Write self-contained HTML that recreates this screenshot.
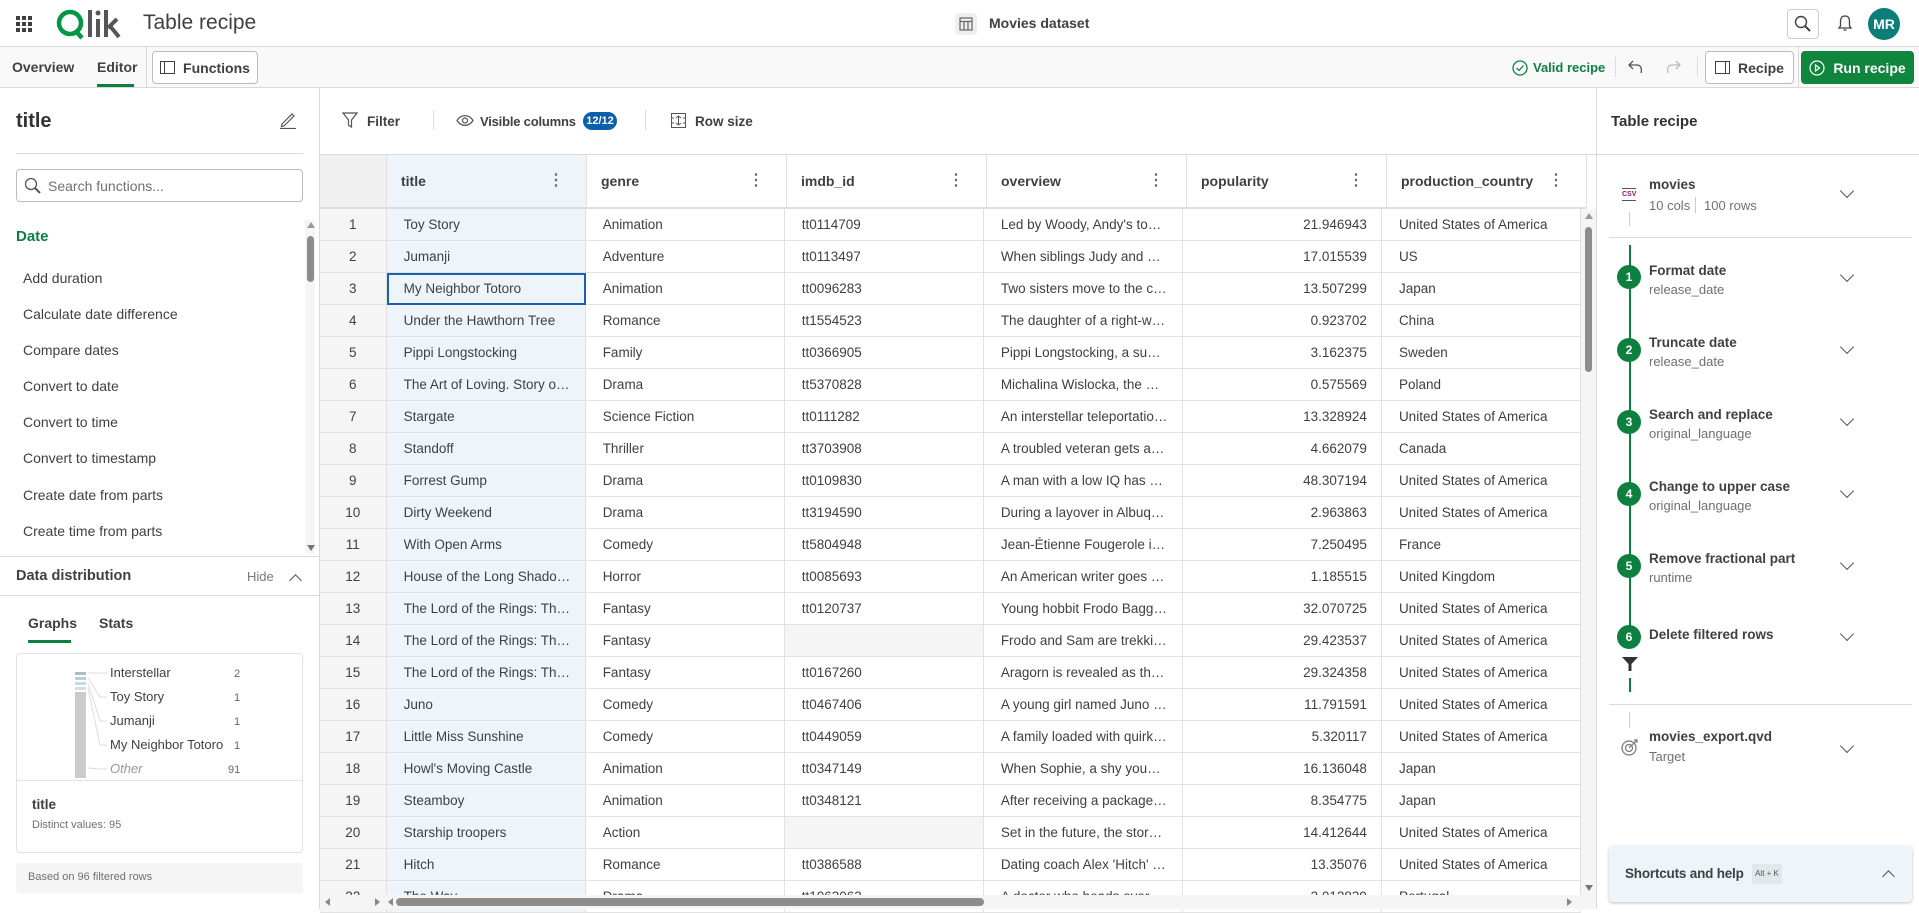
<!DOCTYPE html>
<html><head><meta charset="utf-8">
<style>
*{box-sizing:border-box;margin:0;padding:0}
body{width:1919px;height:909px;overflow:hidden;background:#fff;font-family:"Liberation Sans",sans-serif;color:#404040;position:relative;font-size:14px}
.a{position:absolute}
.topbar{left:0;top:0;width:1919px;height:47px;border-bottom:1px solid #d9d9d9;background:#fff}
.tool{left:0;top:47px;width:1919px;height:41px;border-bottom:1px solid #d9d9d9;background:#f9f9f9}
.left{left:0;top:88px;width:320px;height:821px;border-right:1px solid #d9d9d9;background:#fff}
.right{left:1596px;top:88px;width:323px;height:821px;border-left:1px solid #d9d9d9;background:#fff}
.btn{border:1px solid #bcbcbc;border-radius:4px;background:#fff;font-weight:bold;font-size:14px;color:#404040;display:flex;align-items:center;justify-content:center;gap:8px}
.row{position:absolute;left:320px;height:32px;display:flex;width:1261px}
.row>div{height:32px;border-bottom:1px solid #e2e2e2;border-right:1px solid #e2e2e2;line-height:31px;font-size:13.5px;padding:0 14px 0 17px;white-space:nowrap;overflow:hidden;text-overflow:ellipsis;color:#404040}
.c0{width:67px;text-align:center;background:#f5f5f5;padding:0!important}
.c1{width:200px;background:#edf5fb}
.c2,.c3,.c4,.c5,.c6{width:200px}
.c5{text-align:right}
.hdr{position:absolute;left:320px;top:155px;height:54px;display:flex;border-bottom:2px solid #dedede}
.hdr>div{height:52px;border-right:1px solid #e2e2e2;line-height:52px;font-size:14px;font-weight:bold;padding-left:14px;position:relative;width:200px;color:#404040}
.hdr .k{position:absolute;right:22px;top:0;color:#707070;font-weight:bold;font-size:16px}
.fn{position:absolute;left:23px;font-size:14px;color:#404040}
.step{position:absolute;left:1649px;font-weight:bold;font-size:13.5px;color:#404040}
.sub{position:absolute;left:1649px;font-size:13px;color:#707070}
.circ{position:absolute;left:1617px;width:24px;height:24px;border-radius:50%;background:#0d8040;color:#fff;font-size:12px;font-weight:bold;text-align:center;line-height:24px}
.chev{position:absolute;left:1842px;width:10px;height:10px;border-right:1.5px solid #555;border-bottom:1.5px solid #555;transform:rotate(45deg)}
</style></head><body>

<div class="a topbar"></div>
<svg class="a" style="left:16px;top:16px" width="16" height="16"><g fill="#404040"><rect x="0" y="0" width="4" height="4"/><rect x="6" y="0" width="4" height="4"/><rect x="12" y="0" width="4" height="4"/><rect x="0" y="6" width="4" height="4"/><rect x="6" y="6" width="4" height="4"/><rect x="12" y="6" width="4" height="4"/><rect x="0" y="12" width="4" height="4"/><rect x="6" y="12" width="4" height="4"/><rect x="12" y="12" width="4" height="4"/></g></svg>
<svg class="a" style="left:56px;top:8px" width="70" height="32" viewBox="0 0 70 32">
<circle cx="14" cy="15" r="11" fill="none" stroke="#009845" stroke-width="4.5"/>
<path d="M19 22 L26 30" stroke="#009845" stroke-width="4.5"/>
<rect x="32" y="2" width="4" height="27" fill="#555"/>
<rect x="40" y="11" width="4" height="18" fill="#555"/>
<circle cx="42" cy="5" r="2.5" fill="#555"/>
<rect x="48" y="2" width="4" height="27" fill="#555"/>
<path d="M52 20 L61 11 M54 18 L63 29" stroke="#555" stroke-width="4"/>
</svg>
<div class="a" style="left:143px;top:11px;font-size:21px;color:#404040">Table recipe</div>
<div class="a" style="left:955px;top:13px;width:22px;height:22px;border-radius:4px;background:#eee"></div>
<svg class="a" style="left:959px;top:17px" width="14" height="14"><rect x="1" y="1" width="12" height="12" fill="none" stroke="#666" stroke-width="1.2"/><path d="M1 4.5H13M5 4.5V13M9 4.5V13" stroke="#666" stroke-width="1.2"/></svg>
<div class="a" style="left:989px;top:15px;font-size:14px;font-weight:bold">Movies dataset</div>
<div class="a" style="left:1787px;top:9px;width:32px;height:30px;border:1px solid #ccc;border-radius:4px"></div>
<svg class="a" style="left:1794px;top:15px" width="18" height="18"><circle cx="7" cy="7" r="5.5" fill="none" stroke="#404040" stroke-width="1.4"/><path d="M11 11 L16 16" stroke="#404040" stroke-width="2"/></svg>
<svg class="a" style="left:1837px;top:14px" width="16" height="19"><path d="M8 2 C4 2 3.5 5 3.5 8 L3.5 12 L2 14 H14 L12.5 12 L12.5 8 C12.5 5 12 2 8 2Z M6.5 16 H9.5" fill="none" stroke="#404040" stroke-width="1.3"/></svg>
<div class="a" style="left:1868px;top:8px;width:32px;height:32px;border-radius:50%;background:#0c7e78;color:#fff;font-weight:bold;font-size:14px;text-align:center;line-height:32px">MR</div>

<div class="a tool"></div>
<div class="a" style="left:12px;top:59px;font-size:14px;font-weight:bold;color:#404040">Overview</div>
<div class="a" style="left:97px;top:59px;font-size:14px;font-weight:bold;color:#404040">Editor</div>
<div class="a" style="left:97px;top:84px;width:37px;height:3px;background:#0d8040"></div>
<div class="a" style="left:146px;top:47px;width:1px;height:41px;background:#d9d9d9"></div>
<div class="a btn" style="left:152px;top:51px;width:106px;height:33px"><svg width="15" height="13"><rect x="0.5" y="0.5" width="14" height="12" fill="none" stroke="#404040"/><path d="M4.5 0.5V12.5" stroke="#404040"/></svg>Functions</div>
<svg class="a" style="left:1512px;top:60px" width="16" height="16"><circle cx="8" cy="8" r="7" fill="none" stroke="#0d8040" stroke-width="1.3"/><path d="M4.5 8.2 L7 10.5 L11.5 5.5" fill="none" stroke="#0d8040" stroke-width="1.3"/></svg>
<div class="a" style="left:1533px;top:60px;font-size:13px;font-weight:bold;color:#0d8040">Valid recipe</div>
<div class="a" style="left:1615px;top:57px;width:1px;height:20px;background:#ddd"></div>
<svg class="a" style="left:1627px;top:59px" width="18" height="16"><path d="M6 2 L2 6 L6 10 M2 6 H10 C14 6 15 10 14 14" fill="none" stroke="#555" stroke-width="1.3"/></svg>
<svg class="a" style="left:1664px;top:59px" width="18" height="16"><path d="M12 2 L16 6 L12 10 M16 6 H8 C4 6 3 10 4 14" fill="none" stroke="#bbb" stroke-width="1.3"/></svg>
<div class="a" style="left:1697px;top:57px;width:1px;height:20px;background:#ddd"></div>
<div class="a btn" style="left:1705px;top:51px;width:89px;height:33px"><svg width="15" height="13"><rect x="0.5" y="0.5" width="14" height="12" fill="none" stroke="#404040"/><path d="M10.5 0.5V12.5" stroke="#404040"/></svg>Recipe</div>
<div class="a" style="left:1798px;top:47px;width:1px;height:41px;background:#d9d9d9"></div>
<div class="a btn" style="left:1801px;top:51px;width:113px;height:33px;background:#0f853d;border-color:#0f853d;color:#fff"><svg width="16" height="16"><circle cx="8" cy="8" r="7" fill="none" stroke="#fff" stroke-width="1.2"/><path d="M6.5 5 L10.5 8 L6.5 11Z" fill="none" stroke="#fff" stroke-width="1.2"/></svg>Run recipe</div>

<div class="a left"></div>
<div class="a" style="left:16px;top:110px;font-size:20px;font-weight:bold;color:#333">title</div>
<svg class="a" style="left:279px;top:111px" width="18" height="18"><path d="M3 13 L13 3 L15 5 L5 15 L2.5 15.5Z M1 17.5 H17" fill="none" stroke="#555" stroke-width="1.2"/></svg>
<div class="a" style="left:16px;top:153px;width:287px;height:1px;background:#d9d9d9"></div>
<div class="a" style="left:16px;top:169px;width:287px;height:33px;border:1px solid #bcbcbc;border-radius:4px"></div>
<svg class="a" style="left:24px;top:177px" width="18" height="18"><circle cx="7" cy="7" r="5.5" fill="none" stroke="#555" stroke-width="1.3"/><path d="M11 11 L16 16" stroke="#555" stroke-width="2"/></svg>
<div class="a" style="left:48px;top:178px;font-size:14px;color:#707070">Search functions...</div>
<div class="a" style="left:16px;top:228px;font-size:15px;font-weight:bold;color:#0d8040">Date</div>
<div class="fn" style="top:270px">Add duration</div>
<div class="fn" style="top:306px">Calculate date difference</div>
<div class="fn" style="top:342px">Compare dates</div>
<div class="fn" style="top:378px">Convert to date</div>
<div class="fn" style="top:414px">Convert to time</div>
<div class="fn" style="top:450px">Convert to timestamp</div>
<div class="fn" style="top:487px">Create date from parts</div>
<div class="fn" style="top:523px">Create time from parts</div>
<div class="a" style="left:305px;top:220px;width:10px;height:334px;background:#f5f5f5"></div>
<div class="a" style="left:307px;top:222px;width:0;height:0;border-left:4px solid transparent;border-right:4px solid transparent;border-bottom:6px solid #999"></div>
<div class="a" style="left:307px;top:236px;width:7px;height:46px;border-radius:4px;background:#8d8d8d"></div>
<div class="a" style="left:307px;top:545px;width:0;height:0;border-left:4px solid transparent;border-right:4px solid transparent;border-top:6px solid #777"></div>
<div class="a" style="left:0;top:556px;width:320px;height:1px;background:#d9d9d9"></div>
<div class="a" style="left:16px;top:568px;font-size:14.5px;font-weight:bold;color:#404040">Data distribution</div>
<div class="a" style="left:247px;top:569px;font-size:13px;color:#777">Hide</div>
<div class="a" style="left:291px;top:576px;width:9px;height:9px;border-left:1.5px solid #555;border-top:1.5px solid #555;transform:rotate(45deg)"></div>
<div class="a" style="left:0;top:595px;width:320px;height:1px;background:#d9d9d9"></div>
<div class="a" style="left:28px;top:615px;font-size:14px;font-weight:bold;color:#404040">Graphs</div>
<div class="a" style="left:28px;top:640px;width:43px;height:3px;background:#0d8040"></div>
<div class="a" style="left:99px;top:615px;font-size:14px;font-weight:bold;color:#404040">Stats</div>
<div class="a" style="left:16px;top:653px;width:287px;height:200px;border:1px solid #e2e2e2;border-radius:4px"></div>
<svg class="a" style="left:70px;top:668px" width="220" height="110">
<rect x="5" y="4" width="11" height="3" fill="#a4bfca"/><rect x="5" y="9" width="11" height="3" fill="#b9cfd8"/><rect x="5" y="14" width="11" height="3" fill="#c8d9e0"/><rect x="5" y="19" width="11" height="3" fill="#d3e1e7"/>
<rect x="5" y="24" width="11" height="86" fill="#cbcbcb"/>
<path d="M18 5 H37 M18 10 L30 29 H37 M18 15 L30 53 H37 M18 20 L30 77 H37 M18 100 L30 101 H37" stroke="#ddd" fill="none"/>
<text x="40" y="9" font-size="13" fill="#404040" font-family="Liberation Sans">Interstellar</text>
<text x="40" y="33" font-size="13" fill="#404040" font-family="Liberation Sans">Toy Story</text>
<text x="40" y="57" font-size="13" fill="#404040" font-family="Liberation Sans">Jumanji</text>
<text x="40" y="81" font-size="13" fill="#404040" font-family="Liberation Sans">My Neighbor Totoro</text>
<text x="40" y="105" font-size="13" fill="#999" font-style="italic" font-family="Liberation Sans">Other</text>
<text x="164" y="9" font-size="11" fill="#666" font-family="Liberation Sans">2</text>
<text x="164" y="33" font-size="11" fill="#666" font-family="Liberation Sans">1</text>
<text x="164" y="57" font-size="11" fill="#666" font-family="Liberation Sans">1</text>
<text x="164" y="81" font-size="11" fill="#666" font-family="Liberation Sans">1</text>
<text x="158" y="105" font-size="11" fill="#666" font-family="Liberation Sans">91</text>
</svg>
<div class="a" style="left:16px;top:780px;width:287px;height:1px;background:#e2e2e2"></div>
<div class="a" style="left:32px;top:797px;font-size:13.5px;font-weight:bold;color:#404040">title</div>
<div class="a" style="left:32px;top:819px;font-size:11px;color:#707070">Distinct values: 95</div>
<div class="a" style="left:16px;top:863px;width:287px;height:30px;background:#f5f5f5;border-radius:3px"></div>
<div class="a" style="left:28px;top:871px;font-size:11px;color:#707070">Based on 96 filtered rows</div>

<svg class="a" style="left:342px;top:112px" width="16" height="17"><path d="M1 1 H15 L9.5 8 V15 L6.5 13 V8Z" fill="none" stroke="#555" stroke-width="1.2"/></svg>
<div class="a" style="left:367px;top:114px;font-size:13.5px;font-weight:bold">Filter</div>
<div class="a" style="left:433px;top:110px;width:1px;height:20px;background:#ddd"></div>
<svg class="a" style="left:456px;top:114px" width="18" height="13"><path d="M1 6.5 C5 0 13 0 17 6.5 C13 13 5 13 1 6.5Z" fill="none" stroke="#555" stroke-width="1.2"/><circle cx="9" cy="6.5" r="2.5" fill="none" stroke="#555" stroke-width="1.2"/></svg>
<div class="a" style="left:480px;top:114px;font-size:13px;font-weight:bold;letter-spacing:-0.2px">Visible columns</div>
<div class="a" style="left:583px;top:112px;width:34px;height:18px;border-radius:9px;background:#0b5fac;color:#fff;font-size:11px;font-weight:bold;text-align:center;line-height:18px">12/12</div>
<div class="a" style="left:645px;top:110px;width:1px;height:20px;background:#ddd"></div>
<svg class="a" style="left:671px;top:113px" width="15" height="15"><rect x="0.5" y="0.5" width="14" height="14" fill="none" stroke="#555"/><path d="M7.5 3 V12 M5 5 L7.5 3 L10 5 M5 10 L7.5 12 L10 10 M0.5 5 H3 M0.5 10 H3 M12 5 H14.5 M12 10 H14.5" fill="none" stroke="#555"/></svg>
<div class="a" style="left:695px;top:114px;font-size:13.5px;font-weight:bold">Row size</div>
<div class="a" style="left:320px;top:154px;width:1276px;height:1px;background:#d9d9d9"></div>

<div class="hdr">
<div style="width:67px;background:#f0f0f0"></div>
<div style="background:#edf5fb">title<span class="k">⋮</span></div>
<div>genre<span class="k">⋮</span></div>
<div>imdb_id<span class="k">⋮</span></div>
<div>overview<span class="k">⋮</span></div>
<div>popularity<span class="k">⋮</span></div>
<div>production_country<span class="k">⋮</span></div>
</div>

<div class="row" style="top:209px"><div class="c0">1</div><div class="c1">Toy Story</div><div class="c2">Animation</div><div class="c3">tt0114709</div><div class="c4">Led by Woody, Andy's toys live happily</div><div class="c5">21.946943</div><div class="c6">United States of America</div></div>
<div class="row" style="top:241px"><div class="c0">2</div><div class="c1">Jumanji</div><div class="c2">Adventure</div><div class="c3">tt0113497</div><div class="c4">When siblings Judy and Peter discover</div><div class="c5">17.015539</div><div class="c6">US</div></div>
<div class="row" style="top:273px"><div class="c0">3</div><div class="c1" style="outline:2px solid #1a5fb0;outline-offset:-2px">My Neighbor Totoro</div><div class="c2">Animation</div><div class="c3">tt0096283</div><div class="c4">Two sisters move to the country</div><div class="c5">13.507299</div><div class="c6">Japan</div></div>
<div class="row" style="top:305px"><div class="c0">4</div><div class="c1">Under the Hawthorn Tree</div><div class="c2">Romance</div><div class="c3">tt1554523</div><div class="c4">The daughter of a right-wing family</div><div class="c5">0.923702</div><div class="c6">China</div></div>
<div class="row" style="top:337px"><div class="c0">5</div><div class="c1">Pippi Longstocking</div><div class="c2">Family</div><div class="c3">tt0366905</div><div class="c4">Pippi Longstocking, a super strong girl</div><div class="c5">3.162375</div><div class="c6">Sweden</div></div>
<div class="row" style="top:369px"><div class="c0">6</div><div class="c1">The Art of Loving. Story of Michalina</div><div class="c2">Drama</div><div class="c3">tt5370828</div><div class="c4">Michalina Wislocka, the most famous</div><div class="c5">0.575569</div><div class="c6">Poland</div></div>
<div class="row" style="top:401px"><div class="c0">7</div><div class="c1">Stargate</div><div class="c2">Science Fiction</div><div class="c3">tt0111282</div><div class="c4">An interstellar teleportation device</div><div class="c5">13.328924</div><div class="c6">United States of America</div></div>
<div class="row" style="top:433px"><div class="c0">8</div><div class="c1">Standoff</div><div class="c2">Thriller</div><div class="c3">tt3703908</div><div class="c4">A troubled veteran gets a chance</div><div class="c5">4.662079</div><div class="c6">Canada</div></div>
<div class="row" style="top:465px"><div class="c0">9</div><div class="c1">Forrest Gump</div><div class="c2">Drama</div><div class="c3">tt0109830</div><div class="c4">A man with a low IQ has accomplished</div><div class="c5">48.307194</div><div class="c6">United States of America</div></div>
<div class="row" style="top:497px"><div class="c0">10</div><div class="c1">Dirty Weekend</div><div class="c2">Drama</div><div class="c3">tt3194590</div><div class="c4">During a layover in Albuquerque</div><div class="c5">2.963863</div><div class="c6">United States of America</div></div>
<div class="row" style="top:529px"><div class="c0">11</div><div class="c1">With Open Arms</div><div class="c2">Comedy</div><div class="c3">tt5804948</div><div class="c4">Jean-Étienne Fougerole is an</div><div class="c5">7.250495</div><div class="c6">France</div></div>
<div class="row" style="top:561px"><div class="c0">12</div><div class="c1">House of the Long Shadows</div><div class="c2">Horror</div><div class="c3">tt0085693</div><div class="c4">An American writer goes to a</div><div class="c5">1.185515</div><div class="c6">United Kingdom</div></div>
<div class="row" style="top:593px"><div class="c0">13</div><div class="c1">The Lord of the Rings: The Fellowship</div><div class="c2">Fantasy</div><div class="c3">tt0120737</div><div class="c4">Young hobbit Frodo Baggins, after</div><div class="c5">32.070725</div><div class="c6">United States of America</div></div>
<div class="row" style="top:625px"><div class="c0">14</div><div class="c1">The Lord of the Rings: The Two Towers</div><div class="c2">Fantasy</div><div class="c3" style="background:#f5f5f5"></div><div class="c4">Frodo and Sam are trekking to Mordor</div><div class="c5">29.423537</div><div class="c6">United States of America</div></div>
<div class="row" style="top:657px"><div class="c0">15</div><div class="c1">The Lord of the Rings: The Return</div><div class="c2">Fantasy</div><div class="c3">tt0167260</div><div class="c4">Aragorn is revealed as the heir</div><div class="c5">29.324358</div><div class="c6">United States of America</div></div>
<div class="row" style="top:689px"><div class="c0">16</div><div class="c1">Juno</div><div class="c2">Comedy</div><div class="c3">tt0467406</div><div class="c4">A young girl named Juno finds</div><div class="c5">11.791591</div><div class="c6">United States of America</div></div>
<div class="row" style="top:721px"><div class="c0">17</div><div class="c1">Little Miss Sunshine</div><div class="c2">Comedy</div><div class="c3">tt0449059</div><div class="c4">A family loaded with quirky characters</div><div class="c5">5.320117</div><div class="c6">United States of America</div></div>
<div class="row" style="top:753px"><div class="c0">18</div><div class="c1">Howl's Moving Castle</div><div class="c2">Animation</div><div class="c3">tt0347149</div><div class="c4">When Sophie, a shy young woman</div><div class="c5">16.136048</div><div class="c6">Japan</div></div>
<div class="row" style="top:785px"><div class="c0">19</div><div class="c1">Steamboy</div><div class="c2">Animation</div><div class="c3">tt0348121</div><div class="c4">After receiving a package from</div><div class="c5">8.354775</div><div class="c6">Japan</div></div>
<div class="row" style="top:817px"><div class="c0">20</div><div class="c1">Starship troopers</div><div class="c2">Action</div><div class="c3" style="background:#f5f5f5"></div><div class="c4">Set in the future, the story follows</div><div class="c5">14.412644</div><div class="c6">United States of America</div></div>
<div class="row" style="top:849px"><div class="c0">21</div><div class="c1">Hitch</div><div class="c2">Romance</div><div class="c3">tt0386588</div><div class="c4">Dating coach Alex 'Hitch' Hitchens</div><div class="c5">13.35076</div><div class="c6">United States of America</div></div>
<div class="row" style="top:881px"><div class="c0">22</div><div class="c1">The Way</div><div class="c2">Drama</div><div class="c3">tt1063063</div><div class="c4">A doctor who heads overseas</div><div class="c5">3.012839</div><div class="c6">Portugal</div></div>

<div class="a" style="left:1581px;top:209px;width:15px;height:686px;background:#f5f5f5"></div>
<div class="a" style="left:1585px;top:213px;width:0;height:0;border-left:4px solid transparent;border-right:4px solid transparent;border-bottom:6px solid #999"></div>
<div class="a" style="left:1585px;top:227px;width:7px;height:145px;border-radius:4px;background:#8d8d8d"></div>
<div class="a" style="left:1585px;top:885px;width:0;height:0;border-left:4px solid transparent;border-right:4px solid transparent;border-top:6px solid #777"></div>
<div class="a" style="left:320px;top:895px;width:1276px;height:14px;background:#f5f5f5"></div>
<div class="a" style="left:325px;top:898px;width:0;height:0;border-top:4px solid transparent;border-bottom:4px solid transparent;border-right:5px solid #888"></div>
<div class="a" style="left:375px;top:898px;width:0;height:0;border-top:4px solid transparent;border-bottom:4px solid transparent;border-left:5px solid #888"></div>
<div class="a" style="left:388px;top:898px;width:0;height:0;border-top:4px solid transparent;border-bottom:4px solid transparent;border-right:5px solid #888"></div>
<div class="a" style="left:396px;top:898px;width:588px;height:8px;border-radius:4px;background:#8d8d8d"></div>
<div class="a" style="left:1567px;top:898px;width:0;height:0;border-top:4px solid transparent;border-bottom:4px solid transparent;border-left:5px solid #888"></div>

<div class="a right"></div>
<div class="a" style="left:1611px;top:113px;font-size:15px;font-weight:bold;color:#333">Table recipe</div>
<div class="a" style="left:1596px;top:154px;width:323px;height:1px;background:#d9d9d9"></div>
<div class="a" style="left:1622px;top:188px;width:14px;height:1px;background:#555"></div>
<div class="a" style="left:1622px;top:191px;font-size:7px;color:#8b1a6b;font-weight:bold">CSV</div>
<div class="a" style="left:1622px;top:200px;width:14px;height:1px;background:#555"></div>
<div class="a" style="left:1649px;top:177px;font-size:13.5px;font-weight:bold;color:#404040">movies</div>
<div class="a" style="left:1649px;top:198px;font-size:13px;color:#707070">10 cols</div>
<div class="a" style="left:1695px;top:197px;width:1px;height:16px;background:#ccc"></div>
<div class="a" style="left:1704px;top:198px;font-size:13px;color:#707070">100 rows</div>
<div class="chev" style="top:186px"></div>
<div class="a" style="left:1629px;top:212px;width:1px;height:14px;background:#ccc"></div>
<div class="a" style="left:1609px;top:237px;width:303px;height:1px;background:#d9d9d9"></div>
<div class="a" style="left:1629px;top:245px;width:2px;height:400px;background:#0d8040"></div>
<div class="circ" style="top:265px">1</div><div class="step" style="top:263px">Format date</div><div class="sub" style="top:282px">release_date</div><div class="chev" style="top:270px"></div>
<div class="circ" style="top:338px">2</div><div class="step" style="top:335px">Truncate date</div><div class="sub" style="top:354px">release_date</div><div class="chev" style="top:342px"></div>
<div class="circ" style="top:410px">3</div><div class="step" style="top:407px">Search and replace</div><div class="sub" style="top:426px">original_language</div><div class="chev" style="top:414px"></div>
<div class="circ" style="top:482px">4</div><div class="step" style="top:479px">Change to upper case</div><div class="sub" style="top:498px">original_language</div><div class="chev" style="top:486px"></div>
<div class="circ" style="top:554px">5</div><div class="step" style="top:551px">Remove fractional part</div><div class="sub" style="top:570px">runtime</div><div class="chev" style="top:558px"></div>
<div class="circ" style="top:625px">6</div><div class="step" style="top:627px">Delete filtered rows</div><div class="chev" style="top:629px"></div>
<svg class="a" style="left:1621px;top:656px" width="18" height="17"><path d="M1 1 H17 L10.5 8 V15 L7.5 15 V8Z" fill="#333"/></svg>
<div class="a" style="left:1629px;top:678px;width:2px;height:14px;background:#0d8040"></div>
<div class="a" style="left:1609px;top:704px;width:303px;height:1px;background:#d9d9d9"></div>
<div class="a" style="left:1629px;top:712px;width:1px;height:16px;background:#ccc"></div>
<svg class="a" style="left:1620px;top:737px" width="20" height="20"><circle cx="9" cy="11" r="7" fill="none" stroke="#777" stroke-width="1.2"/><circle cx="9" cy="11" r="3.5" fill="none" stroke="#777" stroke-width="1.2"/><path d="M9 11 L17 3 M14 3 H17 V6" fill="none" stroke="#777" stroke-width="1.2"/></svg>
<div class="a" style="left:1649px;top:729px;font-size:13.5px;font-weight:bold;color:#404040">movies_export.qvd</div>
<div class="a" style="left:1649px;top:749px;font-size:13px;color:#707070">Target</div>
<div class="chev" style="top:741px"></div>
<div class="a" style="left:1609px;top:846px;width:303px;height:56px;background:#edf5fb;border-radius:4px;box-shadow:0 1px 3px rgba(0,0,0,0.25)"></div>
<div class="a" style="left:1625px;top:866px;font-size:13.5px;font-weight:bold;color:#404040;letter-spacing:-0.2px">Shortcuts and help</div>
<div class="a" style="left:1752px;top:864px;width:30px;height:20px;background:#e1e8ec;border-radius:2px;font-size:8px;color:#555;text-align:center;line-height:20px">Alt + K</div>
<div class="a" style="left:1884px;top:872px;width:9px;height:9px;border-left:1.5px solid #555;border-top:1.5px solid #555;transform:rotate(45deg)"></div>
</body></html>
